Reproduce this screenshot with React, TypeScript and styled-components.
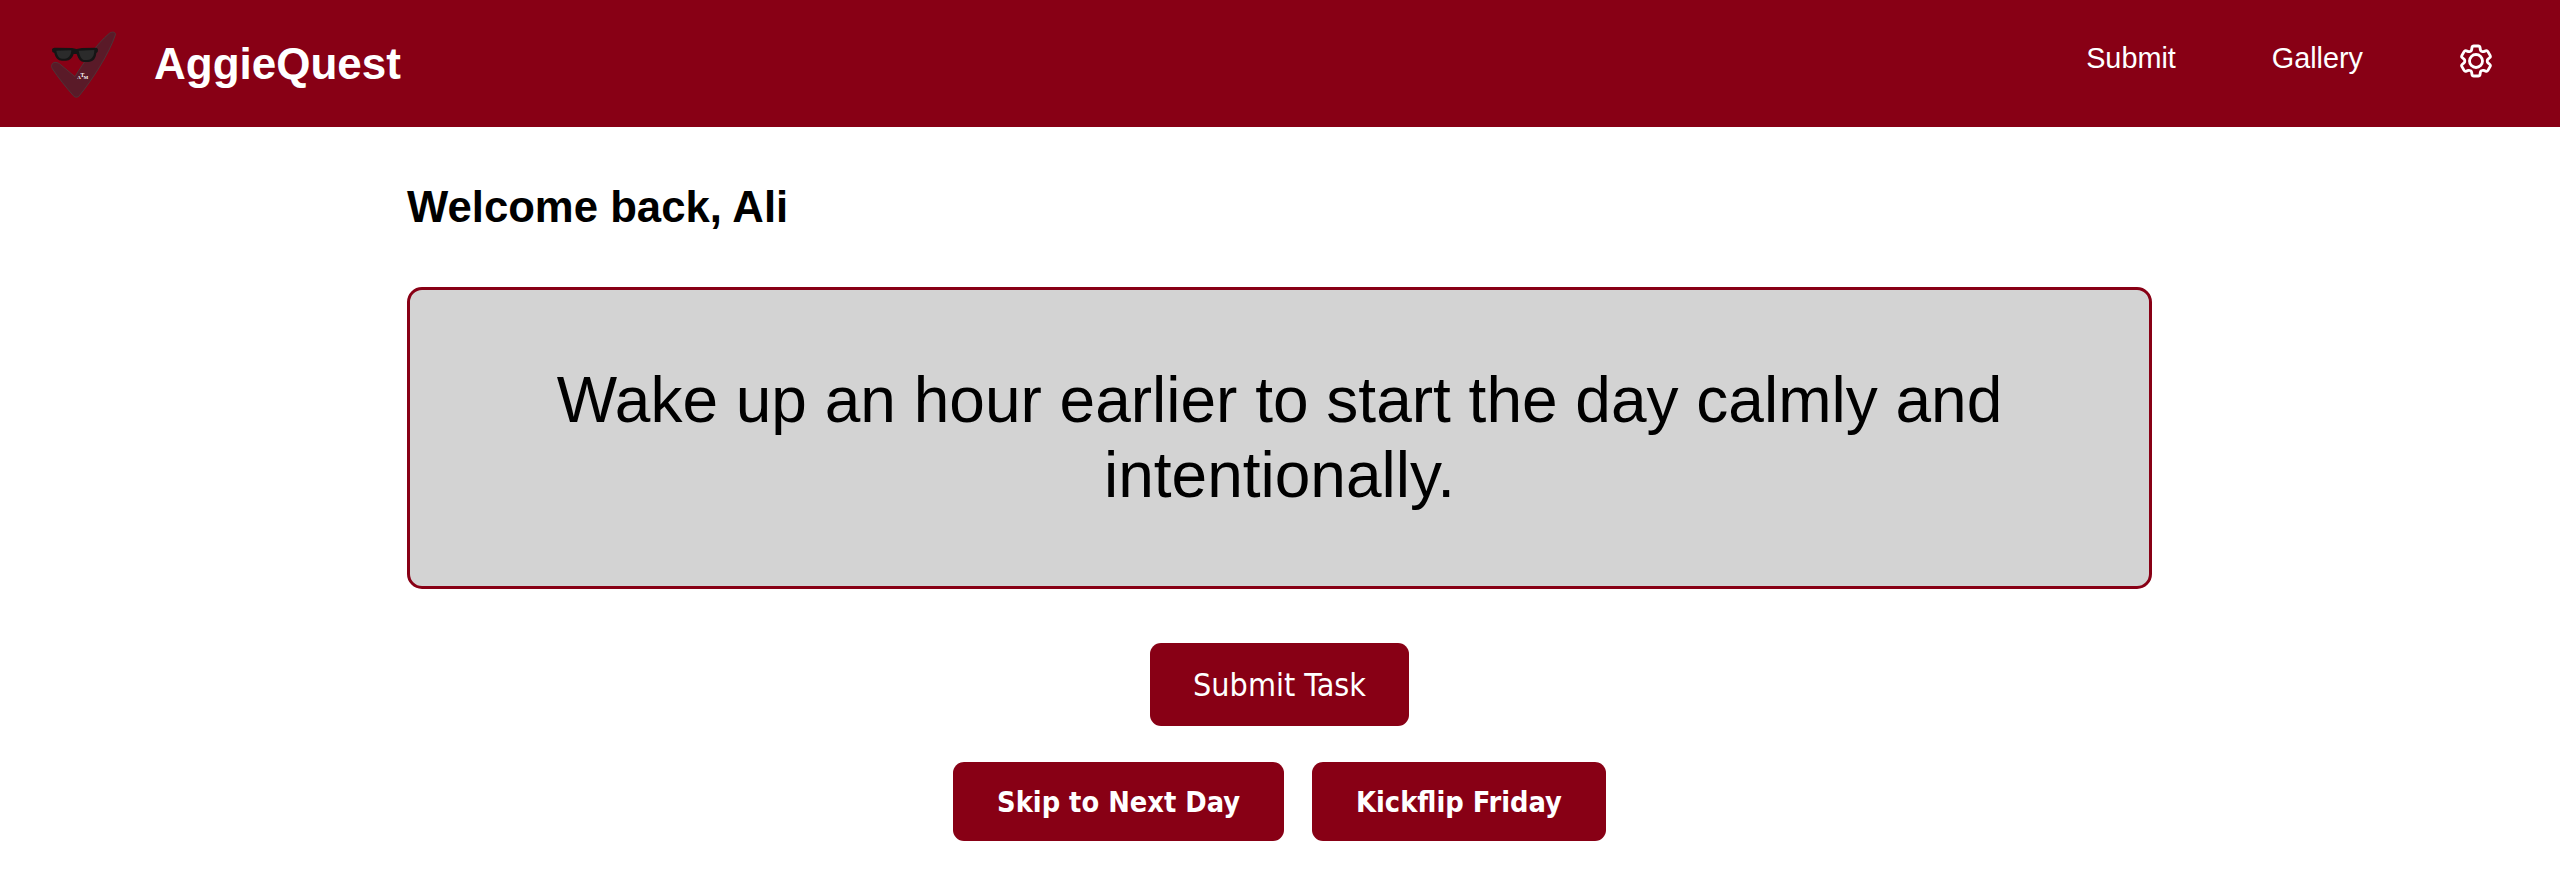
import React from "react";
import styled, { createGlobalStyle } from "styled-components";

const Global = createGlobalStyle`
  html, body { margin: 0; padding: 0; background: #fff; }
  body { font-family: "Liberation Sans", Arial, sans-serif; }
`;

const Header = styled.header`
  height: 127px;
  background: #880015;
  display: flex;
  align-items: center;
  justify-content: space-between;
  padding: 0 64px 0 50px;
  color: #fff;
`;
const Brand = styled.div`
  display: flex;
  align-items: center;
  gap: 34px;
`;
const Logo = styled.svg`
  width: 70px;
  height: 70px;
  display: block;
  margin-top: 3px;
`;
const BrandName = styled.span`
  font-size: 44px;
  font-weight: 700;
`;
const Nav = styled.nav`
  display: flex;
  align-items: center;
  gap: 96px;
  padding-bottom: 6px;
`;
const NavLink = styled.a`
  font-size: 28.8px;
  color: #fff;
  margin-bottom: 4px;
`;
const Gear = styled.svg`
  width: 40px;
  height: 40px;
  display: block;
  margin-left: -3px;
`;
const Main = styled.main`
  width: 1745px;
  margin: 0 0 0 407px;
  padding-top: 54px;
  display: flex;
  flex-direction: column;
  align-items: center;
`;
const Welcome = styled.h1`
  align-self: flex-start;
  margin: 0 0 55px;
  font-size: 43.7px;
  line-height: 51px;
  font-weight: 700;
  color: #000;
`;
const TaskBox = styled.div`
  box-sizing: border-box;
  width: 100%;
  height: 302px;
  background: #d3d3d3;
  border: 3px solid #880015;
  border-radius: 15px;
  display: flex;
  align-items: center;
  justify-content: center;
  padding: 0 100px;
  text-align: center;
  font-size: 64px;
  line-height: 75px;
  color: #000;
`;
const ActionButton = styled.button<{ $bold?: boolean }>`
  border: 0;
  background: #880015;
  color: #fff;
  border-radius: 11px;
  font-family: "DejaVu Sans", sans-serif;
  font-stretch: condensed;
  font-size: ${(p) => (p.$bold ? "28.7px" : "32px")};
  font-weight: ${(p) => (p.$bold ? 700 : 400)};
  padding: 0 ${(p) => (p.$bold ? "44px" : "43px")};
  height: ${(p) => (p.$bold ? "79px" : "83px")};
`;
const PrimaryRow = styled.div`
  margin-top: 54px;
`;
const SecondaryRow = styled.div`
  margin-top: 36px;
  display: flex;
  gap: 28px;
`;

export default function App() {
  return (
    <>
      <Global />
      <Header>
        <Brand>
          <Logo viewBox="0 0 210 210">
            <path
              d="M6 103 C10 95 20 96 28 101 L75 140 C100 98 140 42 178 10 C186 4 198 5 196 15 C178 70 128 148 88 197 C83 203 75 203 70 197 C48 172 24 142 7 116 C4 111 4 107 6 103 Z"
              fill="#5a1a28"
              stroke="#4a3a3c"
              strokeWidth="2.5"
            />
            <path
              d="M6 58 C8 54 12 53 18 53 L66 54 C72 54 75 57 80 57 C85 57 90 54 96 54 L136 53 C141 53 144 55 144 59 L143 66 L139 69 C138 84 130 96 114 96 L102 96 C92 96 85 88 80 72 L71 72 C67 84 60 92 48 92 L36 92 C24 92 16 84 13 69 L7 66 Z"
              fill="#151515"
            />
            <path d="M19 62 L64 61 C63 76 56 86 44 86 L36 86 C27 86 21 76 19 62 Z" fill="#2b2b2b" />
            <path d="M86 62 L133 60 C133 77 126 90 112 90 L104 90 C95 90 89 78 86 62 Z" fill="#2b2b2b" />
            <text x="87" y="147" fontSize="15" fontWeight="700" fill="#fff" fontFamily="Liberation Serif, serif" textAnchor="middle">A</text>
            <text x="97" y="141" fontSize="17" fontWeight="700" fill="#fff" fontFamily="Liberation Serif, serif" textAnchor="middle">T</text>
            <text x="108" y="147" fontSize="14" fontWeight="700" fill="#fff" fontFamily="Liberation Serif, serif" textAnchor="middle">M</text>
          </Logo>
          <BrandName>AggieQuest</BrandName>
        </Brand>
        <Nav>
          <NavLink>Submit</NavLink>
          <NavLink>Gallery</NavLink>
          <Gear viewBox="0 0 24 24" fill="none" stroke="#fff" strokeWidth="1.7" strokeLinecap="round" strokeLinejoin="round">
            <path d="M9.594 3.94c.09-.542.56-.94 1.11-.94h2.593c.55 0 1.02.398 1.11.94l.213 1.281c.063.374.313.686.645.87.074.04.147.083.22.127.325.196.72.257 1.075.124l1.217-.456a1.125 1.125 0 0 1 1.37.49l1.296 2.247a1.125 1.125 0 0 1-.26 1.431l-1.003.827c-.293.241-.438.613-.43.992a7.723 7.723 0 0 1 0 .255c-.008.378.137.75.43.991l1.004.827c.424.35.534.955.26 1.43l-1.298 2.247a1.125 1.125 0 0 1-1.369.491l-1.217-.456c-.355-.133-.75-.072-1.076.124a6.47 6.47 0 0 1-.22.128c-.331.183-.581.495-.644.869l-.213 1.281c-.09.543-.56.94-1.11.94h-2.594c-.55 0-1.019-.398-1.11-.94l-.213-1.281c-.062-.374-.312-.686-.644-.87a6.52 6.52 0 0 1-.22-.127c-.325-.196-.72-.257-1.076-.124l-1.217.456a1.125 1.125 0 0 1-1.369-.49l-1.297-2.247a1.125 1.125 0 0 1 .26-1.431l1.004-.827c.292-.24.437-.613.43-.991a6.932 6.932 0 0 1 0-.255c.007-.38-.138-.751-.43-.992l-1.004-.827a1.125 1.125 0 0 1-.26-1.43l1.297-2.247a1.125 1.125 0 0 1 1.37-.491l1.216.456c.356.133.751.072 1.076-.124.072-.044.146-.086.22-.128.332-.183.582-.495.644-.869l.214-1.28Z" />
            <circle cx="12" cy="12" r="3.9" />
          </Gear>
        </Nav>
      </Header>
      <Main>
        <Welcome>Welcome back, Ali</Welcome>
        <TaskBox>Wake up an hour earlier to start the day calmly and intentionally.</TaskBox>
        <PrimaryRow>
          <ActionButton>Submit Task</ActionButton>
        </PrimaryRow>
        <SecondaryRow>
          <ActionButton $bold>Skip to Next Day</ActionButton>
          <ActionButton $bold>Kickflip Friday</ActionButton>
        </SecondaryRow>
      </Main>
    </>
  );
}
